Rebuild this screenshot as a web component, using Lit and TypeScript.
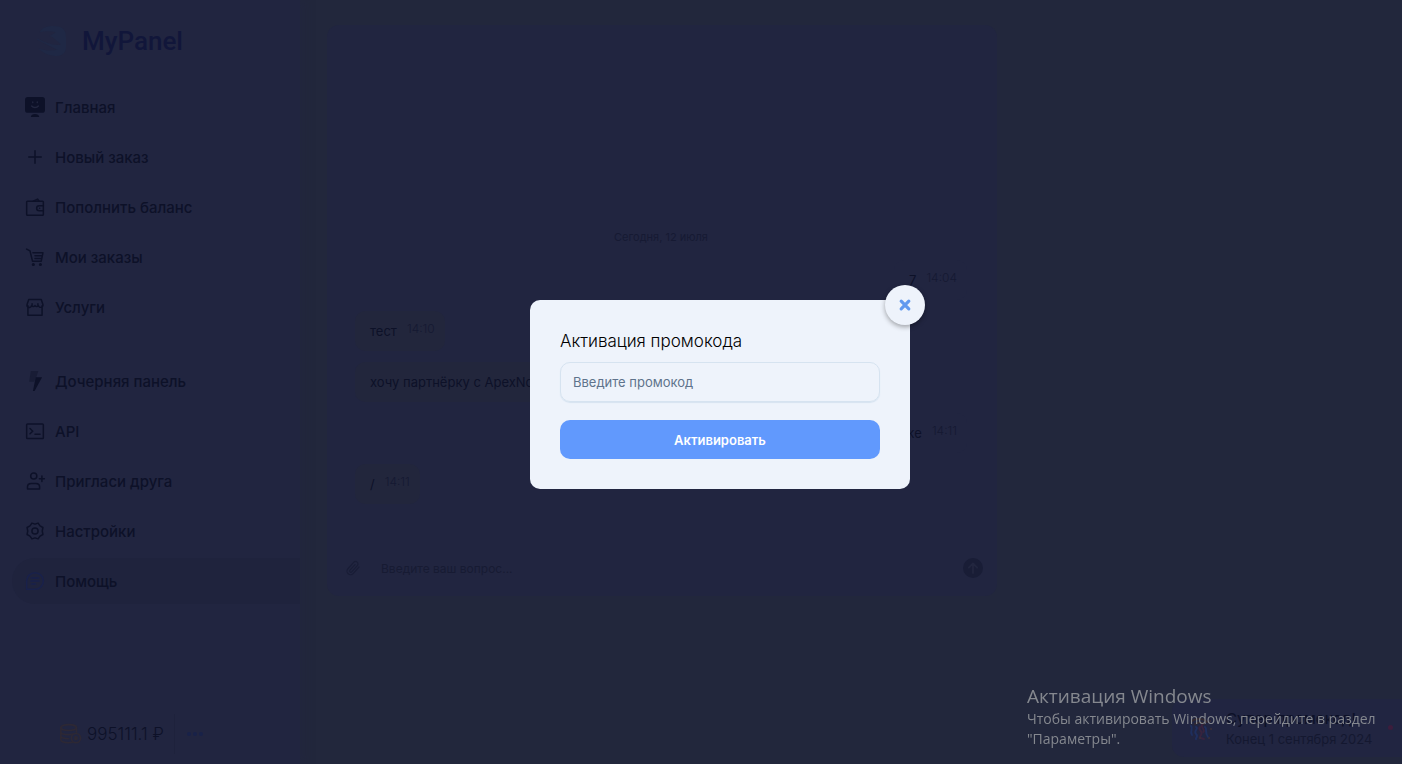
import { LitElement, html, svg, css } from "lit";
import { customElement, property } from "lit/decorators.js";

const icons: Record<string, unknown> = {
  home: svg`<rect x="0" y="0" width="24" height="19" rx="3.5" fill="currentColor" stroke="none"/><path d="M7 24c.5-2.400 2-3.500 5-3.500s4.500 1.100 5 3.500z" fill="currentColor" stroke="none"/><path class="cut" d="M8 10.800c1.800 2.400 6.200 2.400 8 0M9.300 6v.8M14.700 6v.8"/>`,
  plus: svg`<path d="M12 4.500v15M4.500 12h15"/>`,
  wallet: svg`<rect x="2" y="5" width="20" height="17" rx="1"/><path d="M10 5l5-2.500L17 5M22 10.500h-5a3 3 0 0 0 0 6h5M17.500 13.500h.1"/>`,
  cart: svg`<path d="M2 2.500l4 2.200 3 12.300h10.500l2-10H9.500M12 10.500h8.500M12 13.700h8"/><circle cx="10" cy="21" r="1" fill="currentColor"/><circle cx="18.500" cy="21" r="1" fill="currentColor"/>`,
  shop: svg`<path d="M3.500 10.500V22h17V10.500M4.500 3h15l2 6a2.700 2.700 0 0 1-5.300 1.400 2.900 2.900 0 0 1-4.200 0 2.900 2.900 0 0 1-4.200 0A2.700 2.700 0 0 1 2.500 9zM8.500 8v2M15.500 8v2"/>`,
  bolt: svg`<path d="M7 0h9l-2.500 7.500L11 13H5z" fill="currentColor" stroke="none" opacity=".45"/><path d="M13 7.500h7.500L11.500 24h-2l2-10z" fill="currentColor" stroke="none"/>`,
  api: svg`<rect x="2" y="3.500" width="20" height="17.500" rx="1"/><path d="M6 9l3.300 3.200L6 15.400M12 16h6"/>`,
  invite: svg`<circle cx="10.500" cy="6" r="3.700"/><path d="M3 21.500V19c0-2.500 1.800-4 4.500-4h5.500c2.700 0 4.500 1.500 4.500 4v2.500zM20.300 6v6.500M17.300 9.200h5.900"/>`,
  gear: svg`<circle cx="12" cy="12" r="3.700"/><path d="M8.300 2.500L12 3.800l3.700-1.300 2.300 3.300 3.500 2-.8 4.200.8 4.200-3.500 2-2.300 3.300-3.700-1.300-3.700 1.300L6 18.200l-3.500-2 .8-4.200-.8-4.200 3.500-2z"/>`,
  help: svg`<path d="M2 22V12a10 10 0 1 1 10 10zM7.500 8.500h9M7 12h10M7.500 15.500h5"/>`,
  coins: svg`<ellipse cx="10.500" cy="5" rx="8.500" ry="3.200"/><path d="M2 5v13c0 2 3.500 3.500 8.500 3.500 1.700 0 3-.2 4.200-.5M2 9.500c0 2 3.500 3.200 8.500 3.200 2 0 3.500-.2 5-.7M2 14c0 2 3.500 3.200 8.500 3.200M19 5v5"/><circle cx="18.500" cy="16.500" r="5"/><circle cx="18.500" cy="16.500" r="1.300" fill="currentColor"/>`,
  clip: svg`<path d="M21 10.500l-8.800 9.800a5.300 5.300 0 0 1-7.800-7.200L13 3.500a3.700 3.700 0 0 1 5.500 5l-8.400 9.300a1.800 1.800 0 0 1-2.700-2.500l7.700-8.500"/>`,
  send: svg`<circle cx="12" cy="12" r="12" fill="currentColor" stroke="none"/><path class="cut wide" d="M12 18V6.500M7 11.500l5-5 5 5"/>`,
  close: svg`<path d="M5.500 5.500l13 13M18.500 5.500l-13 13" stroke-width="5.500"/>`,
  confetti: svg`<g stroke-width="1.900"><path stroke="#1f2f5e" d="M3 10c3 3-2 5 1 9M8 11c3 2-3 4 0 7s-1 4 0 5M17 11c3 3-1 5 3 10"/><path stroke="#38233e" d="M12 11c-3 3 4 4 1 8s2 3 3 4M14.500 8c-3 3 3 5 1 8"/><path stroke="#33292f" d="M4 5c4-3 11-3 15 1M7 8c3-2 7-2 9 0"/><path stroke="#38303a" d="M22 5h.1M23 13h.1M12 22h.1M21 22h.1"/></g>`,
  logo: svg`<path d="M3 5C5 1 9 0 14 0c7 0 10 3 10 9v8c0 4-3 7-7 7-6 0-11-2-15-6 6 2 11 2 15 1C11 16 5 13 1 11v-1c6 3 13 6 19 5-3-3-6-6-9-7l5-3C12 4 7 4 3 5z" fill="currentColor" stroke="none"/>`,
};

@customElement("app-icon")
class AppIcon extends LitElement {
  @property() name = "";
  static styles = css`
    :host { display: block; width: 20px; height: 20px; flex: none; }
    svg { display: block; width: 100%; height: 100%; overflow: visible; fill: none; stroke: currentColor; stroke-width: 1.8; stroke-linecap: round; stroke-linejoin: round; }
    .cut { stroke: #22263f; stroke-width: 1.6; }
    .wide { stroke-width: 2.2; }
  `;
  render() {
    return html`<svg viewBox="0 0 24 24" aria-hidden="true">${icons[this.name]}</svg>`;
  }
}

const mainNav = [
  ["home", "Главная"],
  ["plus", "Новый заказ"],
  ["wallet", "Пополнить баланс"],
  ["cart", "Мои заказы"],
  ["shop", "Услуги"],
];
const moreNav = [
  ["bolt", "Дочерняя панель"],
  ["api", "API"],
  ["invite", "Пригласи друга"],
  ["gear", "Настройки"],
  ["help", "Помощь"],
];
const messages = [
  { own: true, text: "7", time: "14:04" },
  { own: false, text: "тест", time: "14:10" },
  { own: false, text: "хочу партнёрку с ApexNode", time: "14:10" },
  { own: true, text: "уже", time: "14:11" },
  { own: false, text: "/", time: "14:11" },
];

@customElement("app-root")
class AppRoot extends LitElement {
  static styles = css`
    :host { display: block; font-family: Inter, "Liberation Sans", sans-serif; color: #0d1128; }
    * { box-sizing: border-box; }
    button, input { font: inherit; color: inherit; border: 0; background: none; padding: 0; margin: 0; }
    .page { display: flex; min-height: 100vh; background: #22273c; }
    .side { display: flex; flex-direction: column; width: 300px; flex: none; background: #212540; box-shadow: 4px 0 8px #21254080; }
    .brand { display: flex; align-items: center; gap: 16px; height: 82px; padding-left: 36px; font: 500 26px/32px Roboto, sans-serif; color: #11163a; text-decoration: none; }
    .brand app-icon { width: 30px; height: 30px; color: #1f2845; }
    .nav { display: flex; flex-direction: column; gap: 4px; padding: 2px 0 0 12px; }
    .nav + .nav { padding-top: 28px; }
    .link { display: flex; align-items: center; gap: 10px; height: 46px; padding-left: 13px; border-radius: 23px 0 0 23px; font-size: 15px; font-weight: 500; color: #0d1128; text-decoration: none; }
    .active { background: #1f233d; }
    .active app-icon { color: #19214b; }
    .balance { display: flex; align-items: center; gap: 6px; margin: auto 0 10px; padding-left: 59px; font-size: 17px; font-weight: 300; height: 40px; }
    .balance app-icon { width: 22px; height: 22px; color: #2d2834; }
    .more { display: flex; align-items: center; gap: 2px; height: 40px; margin-left: 4px; padding-left: 12px; border-left: 1px solid #1e223c; }
    .dot { width: 4px; height: 4px; border-radius: 50%; background: #182248; }
    .main { flex: 1; padding: 25px 27px; }
    .chat { display: flex; flex-direction: column; max-width: 670px; height: 571px; border-radius: 12px; background: #212540; }
    .log { flex: 1; display: flex; flex-direction: column; justify-content: flex-end; gap: 11px; padding: 0 30px 36px 28px; }
    .day { align-self: center; margin-bottom: 4px; font-size: 11px; line-height: 16px; color: #161a33; }
    .msg { display: flex; align-self: flex-start; gap: 10px; height: 40px; padding: 10px 10px 10px 15px; border-radius: 10px; background: #22263c; font-size: 13px; line-height: 20px; }
    .own { align-self: flex-end; background: #212540; }
    .time { font-size: 12px; font-weight: 300; line-height: 16px; color: #151932; }
    .ask { display: flex; align-items: center; height: 56px; padding: 0 14px 0 18px; color: #191d36; }
    .ask input { flex: 1; margin: 0 12px 0 19px; font-size: 12px; outline: 0; }
    .ask input::placeholder { color: #171b33; opacity: 1; }
    .ask .clip { width: 17px; }
    .ask .clip app-icon { width: 16px; height: 16px; }
    .promo { position: fixed; right: 0; bottom: 7px; display: flex; align-items: center; gap: 14px; width: 230px; height: 58px; padding-left: 16px; border-radius: 12px 0 0 12px; background: #212541; }
    .promo app-icon { width: 24px; height: 24px; }
    .promo strong { display: block; font-size: 15px; font-weight: 500; line-height: 21px; }
    .promo small { display: block; font-size: 13px; line-height: 20px; color: #141830; white-space: nowrap; }
    .alert { position: absolute; right: 9px; top: 26px; width: 5px; height: 5px; border-radius: 50%; background: #3c1d3c; }
    .overlay { position: fixed; inset: 0; display: flex; align-items: center; justify-content: center; padding: 25px 0 0 38px; }
    .modal { position: relative; width: 380px; padding: 30px; border-radius: 10px; background: #eef3fb; color: #000; }
    .title { display: block; margin-bottom: 10px; font-size: 17px; line-height: 22px; font-weight: 300; }
    .modal input { display: block; width: 100%; height: 40px; padding: 0 12px; border: 1px solid #d6e3f0; border-radius: 10px; box-shadow: 0 1px 1px #d6e3f0; font-size: 13px; outline: 0; }
    .modal input::placeholder { color: #5f738c; opacity: 1; }
    .submit { display: block; width: 100%; height: 39px; margin-top: 18px; border-radius: 10px; background: #6199fd; color: #fff; font-size: 13px; font-weight: 600; }
    .close { position: absolute; right: -15px; top: -15px; display: grid; place-items: center; width: 40px; height: 40px; border-radius: 50%; background: #eef3fb; color: #6199ef; box-shadow: 0 2px 5px #0005; }
    .close app-icon { width: 14px; height: 14px; }
    .notice { position: fixed; right: 15px; bottom: 15px; width: 360px; font: 14px/20px "Open Sans", sans-serif; color: #85888f; }
    .notice h2 { margin: 0; font-size: 19px; line-height: 26px; font-weight: 400; }
    .notice p { margin: 0; }
  `;
  link([icon, label]: string[]) {
    return html`<a class="link ${icon === "help" ? "active" : ""}" href="#${icon}"><app-icon name=${icon}></app-icon>${label}</a>`;
  }
  render() {
    return html`
      <div class="page">
        <aside class="side">
          <a class="brand" href="#"><app-icon name="logo"></app-icon>MyPanel</a>
          <nav class="nav">${mainNav.map((n) => this.link(n))}</nav>
          <nav class="nav">${moreNav.map((n) => this.link(n))}</nav>
          <div class="balance">
            <app-icon name="coins"></app-icon><span>995111.1 ₽</span>
            <button class="more" aria-label="Ещё"><span class="dot"></span><span class="dot"></span><span class="dot"></span></button>
          </div>
        </aside>
        <main class="main">
          <section class="chat">
            <div class="log">
              <div class="day">Сегодня, 12 июля</div>
              ${messages.map((m) => html`<div class="msg ${m.own ? "own" : ""}"><span>${m.text}</span><span class="time">${m.time}</span></div>`)}
            </div>
            <form class="ask" @submit=${(e: Event) => e.preventDefault()}>
              <button type="button" class="clip" aria-label="Прикрепить файл"><app-icon name="clip"></app-icon></button>
              <input aria-label="Вопрос" placeholder="Введите ваш вопрос..." />
              <button aria-label="Отправить"><app-icon name="send"></app-icon></button>
            </form>
          </section>
        </main>
      </div>
      <aside class="promo">
        <app-icon name="confetti"></app-icon>
        <div><strong>Супер промокод!</strong><small>Конец 1 сентября 2024</small></div>
        <span class="alert"></span>
      </aside>
      <div class="overlay">
        <form class="modal" role="dialog" aria-modal="true" aria-labelledby="title" @submit=${(e: Event) => e.preventDefault()}>
          <label class="title" id="title" for="code">Активация промокода</label>
          <input id="code" placeholder="Введите промокод" />
          <button class="submit">Активировать</button>
          <button type="button" class="close" aria-label="Закрыть"><app-icon name="close"></app-icon></button>
        </form>
      </div>
      <div class="notice">
        <h2>Активация Windows</h2>
        <p>Чтобы активировать Windows, перейдите в раздел "Параметры".</p>
      </div>
    `;
  }
}
